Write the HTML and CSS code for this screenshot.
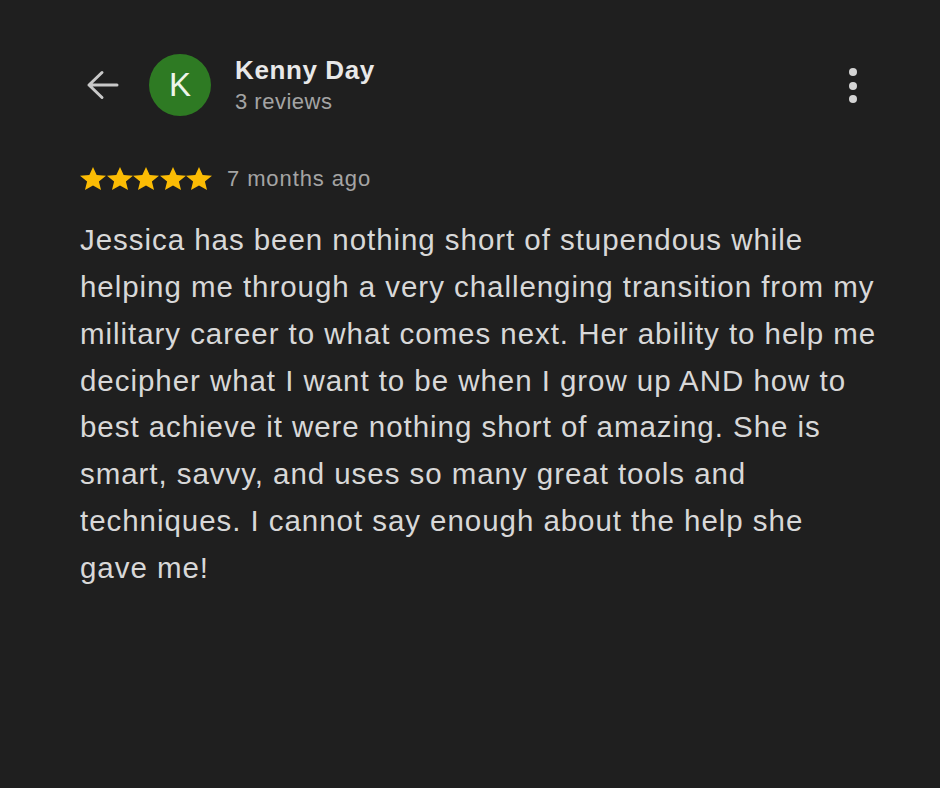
FILE: index.html
```html
<!DOCTYPE html>
<html>
<head>
<meta charset="utf-8">
<link rel="stylesheet" href="styles.css">
</head>
<body>
<div class="page">
  <header class="top">
    <svg class="back" width="34" height="32" viewBox="0 0 34 32"><path d="M32 16H4M17 3.5L4 16l13 12.5" fill="none" stroke="#c8c8c8" stroke-width="3" stroke-linecap="round" stroke-linejoin="round"/></svg>
    <div class="avatar">K</div>
    <div class="who">
      <div class="name">Kenny Day</div>
      <div class="count">3 reviews</div>
    </div>
    <div class="more"><span></span><span></span><span></span></div>
  </header>
  <div class="meta">
    <div class="stars">
      <svg viewBox="2 2 20 19" preserveAspectRatio="none"><path d="M12 17.27L18.18 21l-1.64-7.03L22 9.24l-7.19-.61L12 2 9.19 8.63 2 9.24l5.46 4.73L5.82 21z"/></svg>
      <svg viewBox="2 2 20 19" preserveAspectRatio="none"><path d="M12 17.27L18.18 21l-1.64-7.03L22 9.24l-7.19-.61L12 2 9.19 8.63 2 9.24l5.46 4.73L5.82 21z"/></svg>
      <svg viewBox="2 2 20 19" preserveAspectRatio="none"><path d="M12 17.27L18.18 21l-1.64-7.03L22 9.24l-7.19-.61L12 2 9.19 8.63 2 9.24l5.46 4.73L5.82 21z"/></svg>
      <svg viewBox="2 2 20 19" preserveAspectRatio="none"><path d="M12 17.27L18.18 21l-1.64-7.03L22 9.24l-7.19-.61L12 2 9.19 8.63 2 9.24l5.46 4.73L5.82 21z"/></svg>
      <svg viewBox="2 2 20 19" preserveAspectRatio="none"><path d="M12 17.27L18.18 21l-1.64-7.03L22 9.24l-7.19-.61L12 2 9.19 8.63 2 9.24l5.46 4.73L5.82 21z"/></svg>
    </div>
    <span class="ago">7 months ago</span>
  </div>
  <p class="review">Jessica has been nothing short of stupendous while helping me through a very challenging transition from my military career to what comes next. Her ability to help me decipher what I want to be when I grow up AND how to best achieve it were nothing short of amazing. She is smart, savvy, and uses so many great tools and techniques. I cannot say enough about the help she gave me!</p>
</div>
</body>
</html>
```
FILE: styles.css
```css
html, body {
  margin: 0;
  padding: 0;
  background: #1f1f1f;
}
body {
  width: 940px;
  height: 788px;
  overflow: hidden;
  font-family: "Liberation Sans", Arial, sans-serif;
}
.page {
  padding: 54px 0 0 80px;
}
.top {
  display: flex;
  align-items: flex-start;
  height: 62px;
}
.back {
  margin: 15px 30px 0 5px;
}
.avatar {
  width: 62px;
  height: 62px;
  border-radius: 50%;
  background: #2e7a23;
  color: #eef5ea;
  font-size: 33px;
  display: flex;
  align-items: center;
  justify-content: center;
  margin-right: 24px;
  flex-shrink: 0;
}
.who {
  display: flex;
  flex-direction: column;
  margin-top: 1px;
}
.name {
  color: #e8e8e8;
  font-weight: bold;
  font-size: 26px;
  line-height: 30px;
  letter-spacing: 0.6px;
}
.count {
  color: #a4a4a4;
  font-size: 22px;
  line-height: 28px;
  letter-spacing: 0.5px;
  margin-top: 3px;
}
.more {
  margin: 14px 83px 0 auto;
  display: flex;
  flex-direction: column;
  gap: 5.5px;
}
.more span {
  width: 8px;
  height: 8px;
  border-radius: 50%;
  background: #d4d4d4;
}
.meta {
  display: flex;
  align-items: center;
  margin-top: 47px;
  height: 30px;
}
.stars {
  display: flex;
  gap: 0.5px;
}
.stars svg {
  width: 26px;
  height: 23px;
  fill: #fbbc04;
}
.ago {
  color: #a4a4a4;
  font-size: 22px;
  margin: 2px 0 0 15px;
  letter-spacing: 0.9px;
}
.review {
  margin: 24px 0 0 0;
  width: 797px;
  color: #d8d8d8;
  font-size: 29.5px;
  line-height: 46.86px;
  letter-spacing: 0.95px;
}
```
